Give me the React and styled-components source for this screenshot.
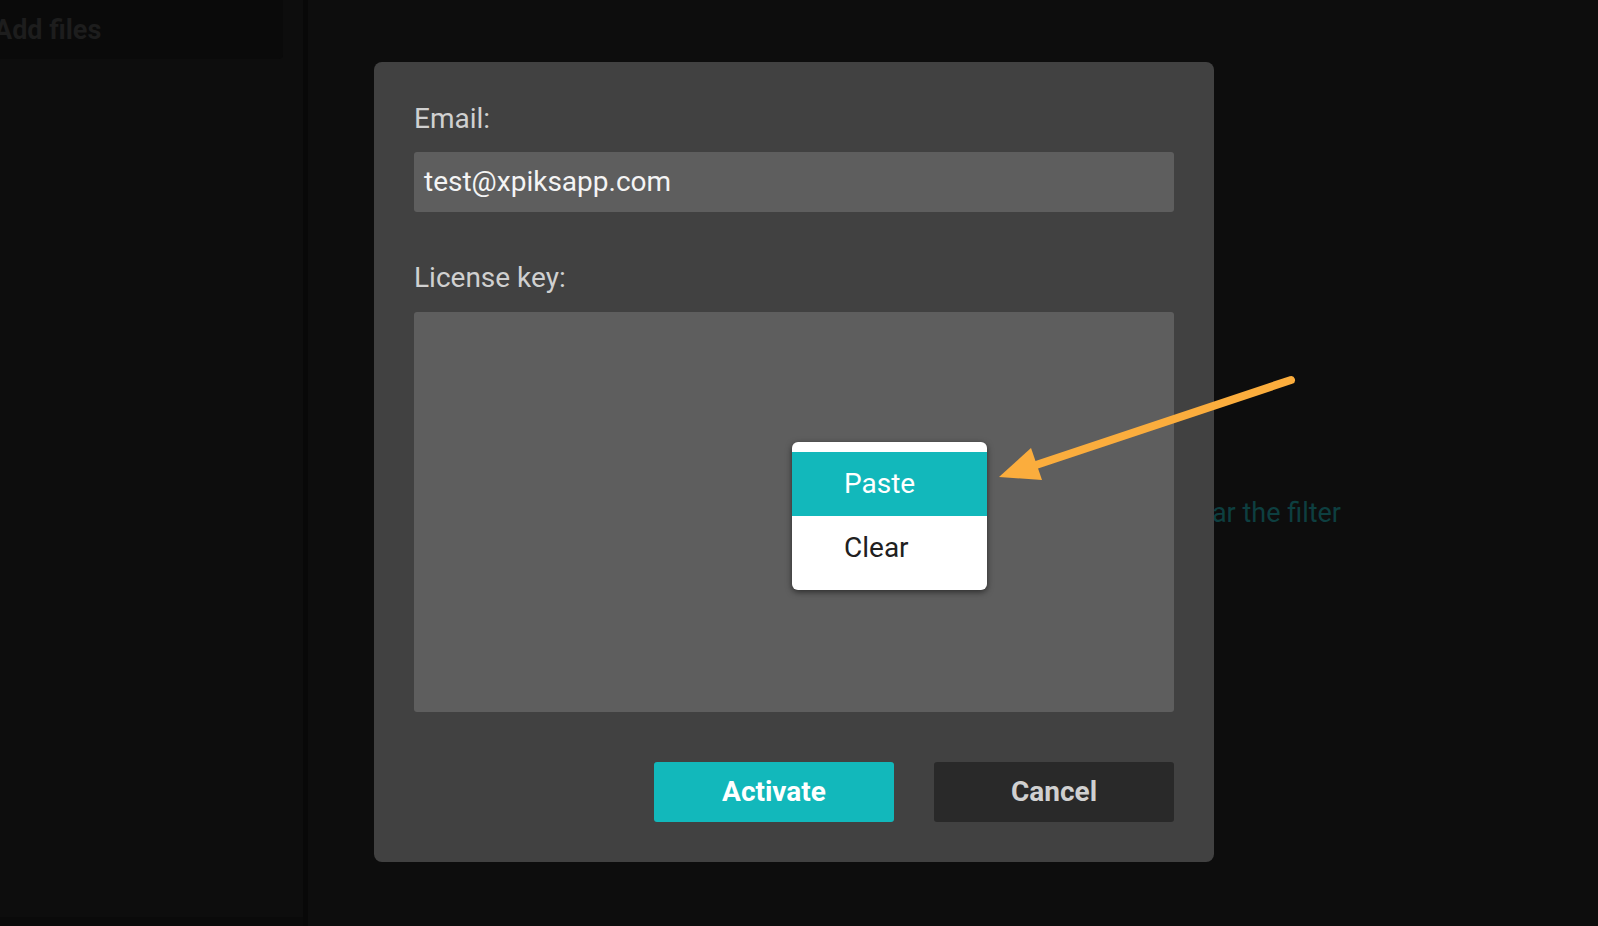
import styled, { createGlobalStyle } from "styled-components";

const GlobalStyle = createGlobalStyle`
  html, body {
    margin: 0;
    padding: 0;
    background: #0d0d0d;
    font-family: Roboto, "Liberation Sans", sans-serif;
    overflow: hidden;
  }
`;

const Screen = styled.div`
  display: flex;
  width: 1598px;
  height: 926px;
  background: #0d0d0d;
`;

/* left panel of the app, dimmed behind the modal */
const Sidebar = styled.aside`
  display: flex;
  flex-direction: column;
  justify-content: space-between;
  width: 303px;
  border-right: 5px solid #080808;
  background: #0d0d0d;
`;

const AddFiles = styled.div`
  display: flex;
  align-items: center;
  width: 283px;
  height: 59px;
  background: #0a0a0a;
  border-bottom-right-radius: 4px;
  overflow: hidden;
  color: #1d1d1d;
  font-size: 27px;
  font-weight: 700;

  & span {
    margin-left: -6px;
  }
`;

const SidebarFoot = styled.div`
  height: 9px;
  background: #0a0a0a;
`;

const Main = styled.main`
  flex: 1;
  display: flex;
  align-items: center;
  justify-content: flex-end;
  padding-right: 257px;
  padding-top: 100px;
`;

const FilterLink = styled.span`
  color: #0d3f40;
  font-size: 27px;
`;

/* modal */
const Overlay = styled.div`
  position: fixed;
  inset: 0;
  display: flex;
  align-items: center;
  justify-content: center;
  padding-right: 10px;
  padding-bottom: 2px;
`;

const Dialog = styled.div`
  display: flex;
  flex-direction: column;
  width: 760px;
  padding: 41px 40px 40px;
  background: #414141;
  border-radius: 8px;
`;

const Label = styled.label`
  display: block;
  color: #d0d0d0;
  font-size: 28px;
  line-height: 32px;
  margin-bottom: ${(p) => p.$gap || 17}px;
`;

const Input = styled.div`
  display: flex;
  align-items: center;
  height: 60px;
  padding: 0 10px 2px;
  background: #5e5e5e;
  border-radius: 3px;
  color: #f4f4f4;
  font-size: 28px;
  margin-bottom: 50px;
  box-sizing: border-box;
`;

const KeyArea = styled.div`
  position: relative;
  height: 400px;
  background: #5e5e5e;
  border-radius: 3px;
  margin-bottom: 50px;
`;

const Menu = styled.ul`
  position: absolute;
  left: 378px;
  top: 130px;
  width: 195px;
  margin: 0;
  padding: 10px 0;
  list-style: none;
  background: #ffffff;
  border-radius: 6px;
  box-shadow: 0 2px 6px rgba(0, 0, 0, 0.55);
`;

const MenuItem = styled.li`
  display: flex;
  align-items: center;
  height: 64px;
  padding: 0 0 2px 52px;
  box-sizing: border-box;
  font-size: 28px;
  background: ${(p) => (p.$active ? "#12b8bb" : "transparent")};
  color: ${(p) => (p.$active ? "#ffffff" : "#202020")};
`;

const Buttons = styled.div`
  display: flex;
  justify-content: flex-end;
  gap: 40px;
`;

const Button = styled.button`
  width: 240px;
  height: 60px;
  padding: 0 0 2px;
  border: none;
  border-radius: 3px;
  font-family: inherit;
  font-size: 28px;
  font-weight: 700;
  background: ${(p) => (p.$primary ? "#12b8bb" : "#292929")};
  color: ${(p) => (p.$primary ? "#ffffff" : "#d0d0d0")};
`;

/* annotation arrow drawn over the screenshot */
const Annotation = styled.svg`
  position: fixed;
  inset: 0;
  pointer-events: none;
`;

export default function App() {
  return (
    <>
      <GlobalStyle />
      <Screen>
        <Sidebar>
          <AddFiles>
            <span>Add files</span>
          </AddFiles>
          <SidebarFoot />
        </Sidebar>
        <Main>
          <FilterLink>Clear the filter</FilterLink>
        </Main>
      </Screen>

      <Overlay>
        <Dialog>
          <Label>Email:</Label>
          <Input>test@xpiksapp.com</Input>
          <Label $gap={18}>License key:</Label>
          <KeyArea>
            <Menu>
              <MenuItem $active>Paste</MenuItem>
              <MenuItem>Clear</MenuItem>
            </Menu>
          </KeyArea>
          <Buttons>
            <Button $primary>Activate</Button>
            <Button>Cancel</Button>
          </Buttons>
        </Dialog>
      </Overlay>

      <Annotation width="1598" height="926" viewBox="0 0 1598 926">
        <line
          x1="1291"
          y1="380"
          x2="1030"
          y2="467"
          stroke="#fbad3d"
          strokeWidth="8"
          strokeLinecap="round"
        />
        <polygon points="999,477 1031,448 1042,480" fill="#fbad3d" />
      </Annotation>
    </>
  );
}
